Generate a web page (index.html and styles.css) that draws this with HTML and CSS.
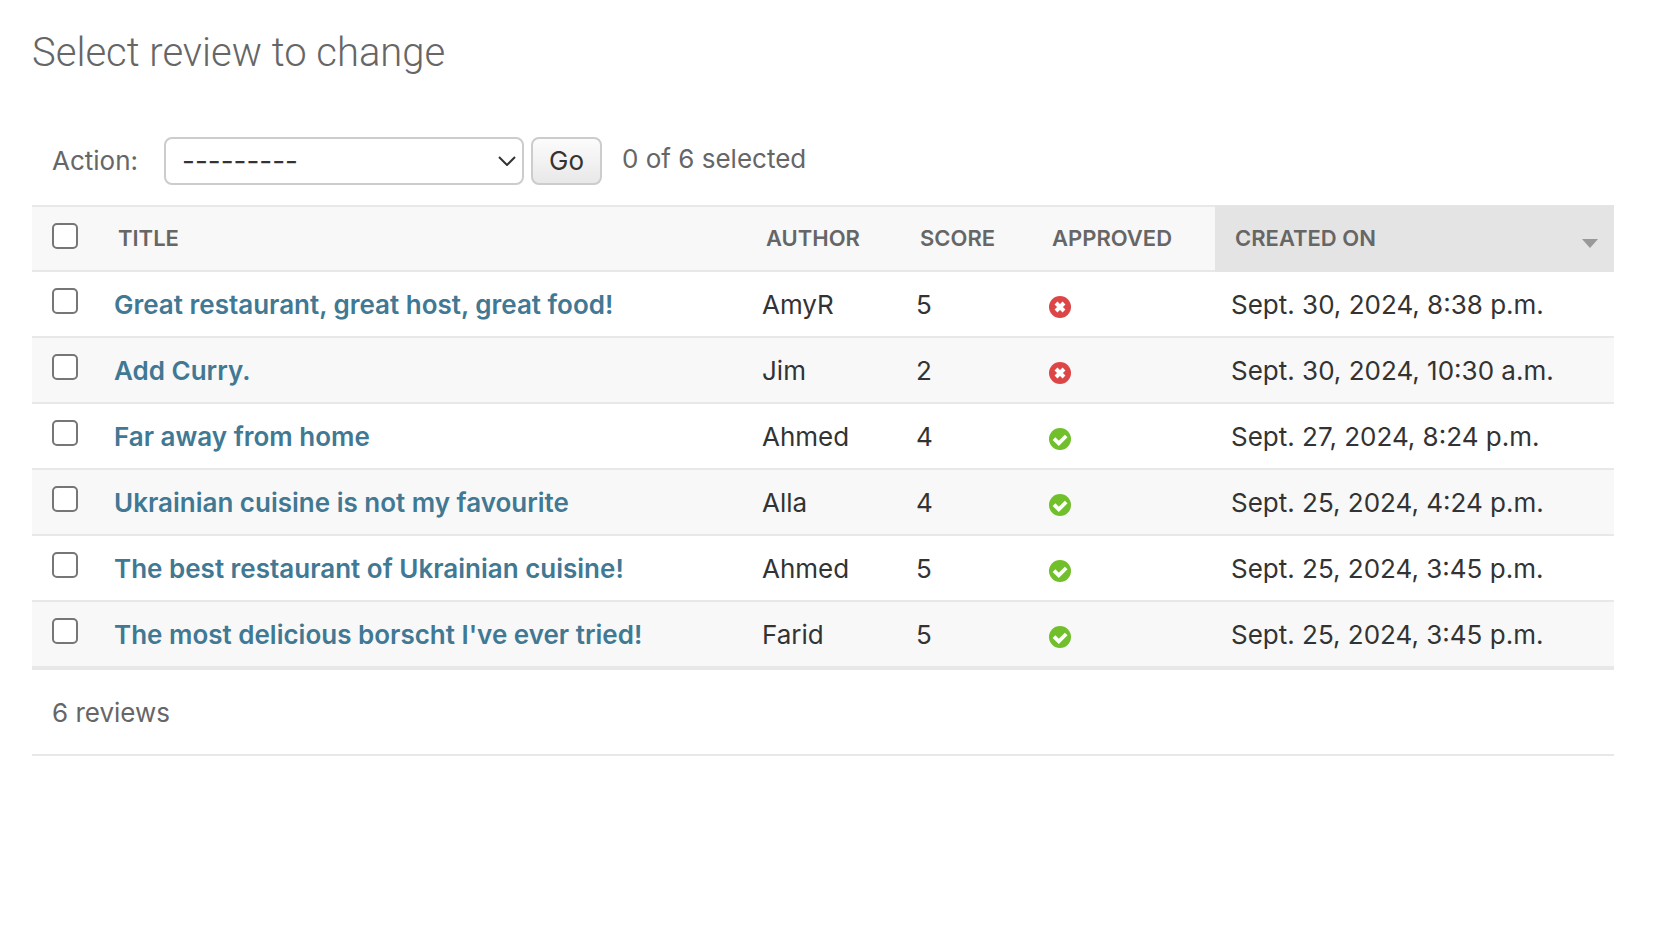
FILE: index.html
```html
<!DOCTYPE html>
<html lang="en">
<head>
<meta charset="utf-8">
<meta name="viewport" content="width=device-width, initial-scale=1">
<title>Select review to change</title>
<link rel="stylesheet" href="styles.css">
</head>
<body>
<svg class="sprite" width="0" height="0" aria-hidden="true">
  <symbol id="icon-no" viewBox="0 0 22 22">
    <circle cx="11" cy="11" r="11" fill="#dd4646"/>
    <path d="M7 7l8 8M15 7l-8 8" fill="none" stroke="#fff" stroke-width="4"/>
  </symbol>
  <symbol id="icon-yes" viewBox="0 0 22 22">
    <circle cx="11" cy="11" r="11" fill="#70bf2b"/>
    <path d="M5 10.6l4.8 4.8 7.4-7.4" fill="none" stroke="#fff" stroke-width="3.8"/>
  </symbol>
</svg>
<main class="content">
  <h1 class="page-title">Select review to change</h1>
  <form class="changelist">
    <div class="actions">
      <label class="actions-label" for="action">Action:</label>
      <span class="select-wrap">
        <select class="action-select" id="action"><option>---------</option></select>
        <svg class="select-arrow" viewBox="0 0 18 10" aria-hidden="true"><path d="M1 1l8 8 8-8" fill="none" stroke="#333" stroke-width="2"/></svg>
      </span>
      <button class="go" type="button">Go</button>
      <span class="counter">0 of 6 selected</span>
    </div>
    <table class="results">
      <colgroup>
        <col class="col-check"><col class="col-title"><col class="col-author"><col class="col-score"><col class="col-approved"><col class="col-created">
      </colgroup>
      <thead>
        <tr>
          <th class="check"><input class="box" type="checkbox" aria-label="Select all reviews"></th>
          <th scope="col"><a class="sort" href="#">Title</a></th>
          <th scope="col"><a class="sort" href="#">Author</a></th>
          <th scope="col"><a class="sort" href="#">Score</a></th>
          <th scope="col"><a class="sort" href="#">Approved</a></th>
          <th scope="col" class="sorted"><a class="sort" href="#">Created on<svg class="sort-arrow" viewBox="0 0 16 9" aria-hidden="true"><path d="M0 0h16L8 9z" fill="#999"/></svg></a></th>
        </tr>
      </thead>
      <tbody>
        <tr>
          <td class="check"><input class="box" type="checkbox" aria-label="Select Great restaurant, great host, great food!"></td>
          <th scope="row"><a class="review" href="#">Great restaurant, great host, great food!</a></th>
          <td>AmyR</td><td>5</td>
          <td><svg class="flag" role="img" aria-label="No"><use href="#icon-no"/></svg></td>
          <td>Sept. 30, 2024, 8:38 p.m.</td>
        </tr>
        <tr>
          <td class="check"><input class="box" type="checkbox" aria-label="Select Add Curry."></td>
          <th scope="row"><a class="review" href="#">Add Curry.</a></th>
          <td>Jim</td><td>2</td>
          <td><svg class="flag" role="img" aria-label="No"><use href="#icon-no"/></svg></td>
          <td>Sept. 30, 2024, 10:30 a.m.</td>
        </tr>
        <tr>
          <td class="check"><input class="box" type="checkbox" aria-label="Select Far away from home"></td>
          <th scope="row"><a class="review" href="#">Far away from home</a></th>
          <td>Ahmed</td><td>4</td>
          <td><svg class="flag" role="img" aria-label="Yes"><use href="#icon-yes"/></svg></td>
          <td>Sept. 27, 2024, 8:24 p.m.</td>
        </tr>
        <tr>
          <td class="check"><input class="box" type="checkbox" aria-label="Select Ukrainian cuisine is not my favourite"></td>
          <th scope="row"><a class="review" href="#">Ukrainian cuisine is not my favourite</a></th>
          <td>Alla</td><td>4</td>
          <td><svg class="flag" role="img" aria-label="Yes"><use href="#icon-yes"/></svg></td>
          <td>Sept. 25, 2024, 4:24 p.m.</td>
        </tr>
        <tr>
          <td class="check"><input class="box" type="checkbox" aria-label="Select The best restaurant of Ukrainian cuisine!"></td>
          <th scope="row"><a class="review" href="#">The best restaurant of Ukrainian cuisine!</a></th>
          <td>Ahmed</td><td>5</td>
          <td><svg class="flag" role="img" aria-label="Yes"><use href="#icon-yes"/></svg></td>
          <td>Sept. 25, 2024, 3:45 p.m.</td>
        </tr>
        <tr>
          <td class="check"><input class="box" type="checkbox" aria-label="Select The most delicious borscht I've ever tried!"></td>
          <th scope="row"><a class="review" href="#">The most delicious borscht I've ever tried!</a></th>
          <td>Farid</td><td>5</td>
          <td><svg class="flag" role="img" aria-label="Yes"><use href="#icon-yes"/></svg></td>
          <td>Sept. 25, 2024, 3:45 p.m.</td>
        </tr>
      </tbody>
    </table>
    <p class="paginator">6 reviews</p>
  </form>
</main>
</body>
</html>
```
FILE: styles.css
```css
* { box-sizing: border-box; }

body {
  margin: 0;
  background: #fff;
  color: #333;
  font-family: Inter, "Liberation Sans", sans-serif;
  font-size: 26px;
  line-height: 32px;
}

.sprite { position: absolute; }

.content { padding: 29px 44px 40px 32px; }

.page-title {
  margin: 0 0 60px;
  color: #666;
  font-family: Roboto, Inter, sans-serif;
  font-size: 40px;
  font-weight: 300;
  line-height: 48px;
}

.actions {
  display: flex;
  align-items: center;
  padding: 0 20px 20px;
  color: #666;
}

.actions-label { margin-right: 26px; }

.select-wrap {
  position: relative;
  flex: 0 1 360px;
  margin-right: 7px;
}

.action-select {
  display: block;
  width: 100%;
  height: 48px;
  padding: 0 40px 0 16px;
  border: 2px solid #ccc;
  border-radius: 8px;
  background: #fff;
  color: #333;
  font: inherit;
  font-size: 28px;
  appearance: none;
}

.select-arrow {
  position: absolute;
  top: 19px;
  right: 8px;
  width: 18px;
  height: 10px;
  pointer-events: none;
}

.go {
  height: 48px;
  margin-right: 20px;
  padding: 0 16px;
  border: 2px solid #ccc;
  border-radius: 8px;
  background: linear-gradient(#fcfcfc, #e8e8e8);
  color: #333;
  font: inherit;
}

.counter { padding-bottom: 4px; }

.results {
  width: 100%;
  border-spacing: 0;
  border-bottom: 2px solid #e8e8e8;
  table-layout: fixed;
}

.col-check { width: 66px; }
.col-author { width: 154px; }
.col-score { width: 132px; }
.col-approved { width: 183px; }
.col-created { width: 399px; }

.results th,
.results td {
  padding: 17px 16px 15px;
  border-bottom: 2px solid #e8e8e8;
  text-align: left;
  vertical-align: top;
}

.results thead th {
  padding: 16px 20px;
  border-top: 2px solid #e8e8e8;
  background: #f8f8f8;
  color: #666;
  font-size: 22px;
  font-weight: 600;
  line-height: 31px;
  text-transform: uppercase;
}

.results thead .sorted {
  background: #e4e4e4;
  border-color: #e4e4e4;
  padding-right: 16px;
}

.results tbody tr:nth-child(even) { background: #f8f8f8; }

.results .check,
.results thead .check { padding: 16px 20px 0; }

.box {
  display: block;
  width: 26px;
  height: 26px;
  margin: 0;
  border: 2px solid #767676;
  border-radius: 5px;
  background: #fff;
  appearance: none;
}

.box:checked { background: #417893; }

.sort {
  display: flex;
  justify-content: space-between;
  align-items: center;
  color: inherit;
  text-decoration: none;
}

.sort-arrow {
  width: 16px;
  height: 9px;
  margin-top: 10px;
}

.review {
  color: #417893;
  font-weight: 600;
  text-decoration: none;
}

.flag {
  display: block;
  width: 22px;
  height: 22px;
  margin: 7px 0 0 1px;
}

.paginator {
  margin: 0;
  padding: 27px 20px 25px;
  border-bottom: 2px solid #e8e8e8;
  color: #666;
}
```
